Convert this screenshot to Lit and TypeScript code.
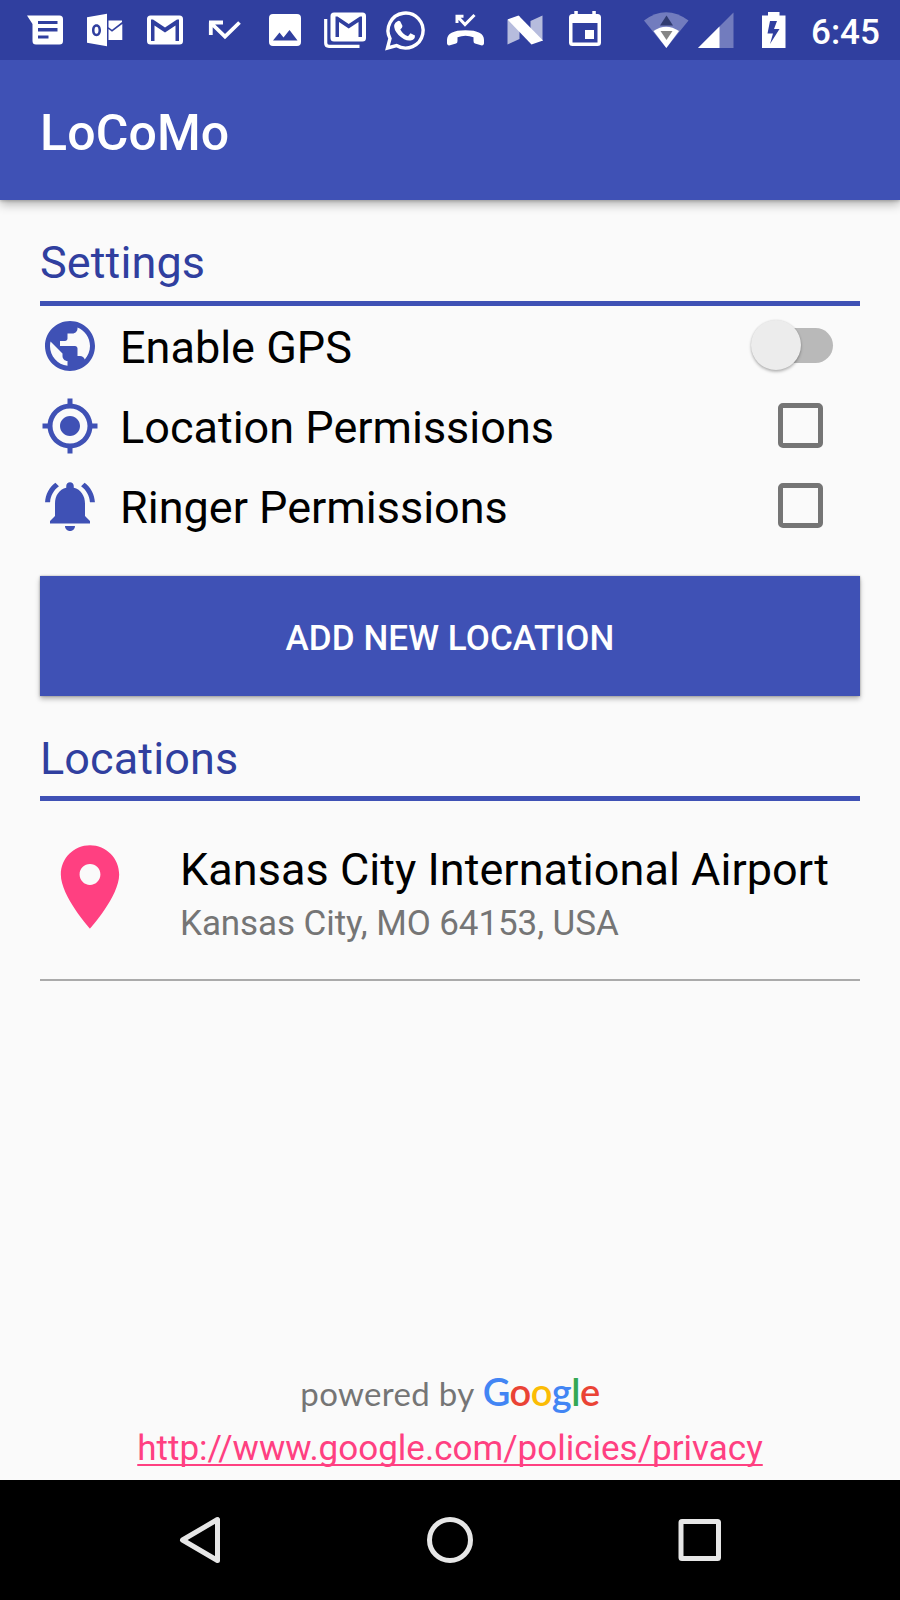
import { LitElement, html, css } from "lit";
import { customElement, property } from "lit/decorators.js";

const GLOBE = "M12 2C6.48 2 2 6.48 2 12s4.48 10 10 10 10-4.48 10-10S17.52 2 12 2zm-1 17.93c-3.95-.49-7-3.85-7-7.93 0-.62.08-1.21.21-1.79L9 15v1c0 1.1.9 2 2 2v1.93zm6.9-2.54c-.26-.81-1-1.39-1.9-1.39h-1v-3c0-.55-.45-1-1-1H8v-2h2c.55 0 1-.45 1-1V7h2c1.1 0 2-.9 2-2v-.41c2.93 1.19 5 4.06 5 7.41 0 2.08-.8 3.97-2.1 5.39z";
const TARGET = "M12 8c-2.21 0-4 1.79-4 4s1.79 4 4 4 4-1.79 4-4-1.79-4-4-4zm8.94 3c-.46-4.17-3.77-7.48-7.94-7.94V1h-2v2.06C6.83 3.52 3.52 6.83 3.06 11H1v2h2.06c.46 4.17 3.77 7.48 7.94 7.94V23h2v-2.06c4.17-.46 7.48-3.77 7.94-7.94H23v-2h-2.06zM12 19c-3.87 0-7-3.13-7-7s3.13-7 7-7 7 3.13 7 7-3.13 7-7 7z";
const BELL = "M7.58 4.08L6.15 2.65C3.75 4.48 2.17 7.3 2.03 10.5h2c.15-2.65 1.51-4.97 3.55-6.42zm12.39 6.42h2c-.15-3.2-1.73-6.02-4.12-7.85l-1.42 1.43c2.02 1.45 3.39 3.77 3.54 6.42zM18 11c0-3.07-1.64-5.64-4.5-6.32V4c0-.83-.67-1.5-1.5-1.5s-1.5.67-1.5 1.5v.68C7.63 5.36 6 7.92 6 11v5l-2 2v1h16v-1l-2-2v-5zm-6 11c.14 0 .27-.01.4-.04.65-.14 1.18-.58 1.44-1.18.1-.24.15-.5.15-.78h-4c.01 1.1.9 2 2.01 2z";
const PIN = "M12 2C8.13 2 5 5.13 5 9c0 5.25 7 13 7 13s7-7.75 7-13c0-3.87-3.13-7-7-7zm0 9.5c-1.38 0-2.5-1.12-2.5-2.5s1.12-2.5 2.5-2.5 2.5 1.12 2.5 2.5-1.12 2.5-2.5 2.5z";

@customElement("status-bar")
class StatusBar extends LitElement {
  static styles = css`
    :host { display: block; height: 60px; background: #303f9f; color: #fff; }
    .bar { display: flex; height: 60px; }
    .icons { display: block; flex: none; }
    .clock { font: 500 35px/41px Roboto, sans-serif; padding-top: 12px; margin-left: 1px; white-space: nowrap; }
  `;
  render() {
    return html`<div class="bar">
      <svg class="icons" width="810" height="60" viewBox="0 0 810 60" fill="#fff">
        <path fill-rule="evenodd" d="M27 15.500H59.500Q63 15.500 63 19V41Q63 44.500 59.500 44.500H36Q32.500 44.500 32.500 41V24ZM38 21v3h19.500v-3ZM38 28v3.500h19.500V28ZM38 35.500v3h10.500v-3Z"/>
        <path fill-rule="evenodd" d="M87 17.300L107 13.700V46.300L87 42.700ZM96.500 24.300C93.800 24.300 92 26.800 92 30.300S93.800 36.200 96.500 36.200 101 33.700 101 30.300 99.200 24.300 96.500 24.300ZM96.500 26.800C98 26.800 98.500 28.500 98.500 30.300S98 33.800 96.500 33.800 94.500 32.200 94.500 30.300 95 26.800 96.500 26.800Z"/>
        <path d="M108.500 20.500H122V22L112 29.800L108.500 27.200ZM108.500 29L112 31.800L122.300 24V40H108.500Z"/>
        <path fill-rule="evenodd" d="M150.500 15.500H179.500Q183 15.500 183 19V41Q183 44.500 179.500 44.500H150.500Q147 44.500 147 41V19Q147 15.500 150.500 15.500ZM151 41H154.500V25.500L165 32.500L175.500 25.500V41H179V19.500H177L165 27.500L153 19.500H151Z"/>
        <path d="M210.800 35V22.500M209 22.500H223M211.500 23.500L225 36.500L239.500 22.500" fill="none" stroke="#fff" stroke-width="3.800"/>
        <path fill-rule="evenodd" d="M273 14H297Q301 14 301 18V42Q301 46 297 46H273Q269 46 269 42V18Q269 14 273 14ZM273 40.500H297.500L289.500 30L283.500 37.500L279.500 32.500Z"/>
        <path fill-rule="evenodd" d="M334 12.500H362.500Q366 12.500 366 16V38Q366 41.500 362.500 41.500H334Q330.500 41.500 330.500 38V16Q330.500 12.500 334 12.500ZM335.500 37H339V22L348.700 28.500L358.500 22V37H362V16.500H360L348.700 24L337.500 16.500H335.500Z"/>
        <path d="M325.700 19V43Q325.700 46.300 329 46.300H359.500" fill="none" stroke="#fff" stroke-width="3.200"/>
        <path d="M387.500 48L390 38.500A17.500 17.500 0 1 1 396.500 45.500Z" fill="none" stroke="#fff" stroke-width="3.400"/>
        <path d="M397.500 21.200Q399 20.400 400.300 21.500L402.500 26Q402.500 27.500 400.300 29.500Q403 34.500 408 36.200L410.500 33.300L415 35.500Q415 40 410.500 40.500Q405 41.300 398.500 35Q393.500 29.500 394.200 25Q395 22.300 397.500 21.200Z"/>
        <path d="M457 23V16.200H463.500M457.500 16.500L465 24.500L474.500 15" fill="none" stroke="#fff" stroke-width="3"/>
        <path d="M447 40Q447 30.200 465.500 30.200T484 40V43.500Q483.500 46 481 45.300L475 43.600Q473.500 43 473.500 41V37.200Q465.500 34.200 457.500 37.200V41Q457.500 43 456 43.600L450 45.300Q447.500 46 447 43.500Z"/>
        <path d="M507.500 20V44.500L519.500 39V16ZM530.500 21V36.500L542.500 41V15.500Z" opacity=".65"/>
        <path d="M507.500 19.500L518.500 15.500L543 40.500L531.500 44.500Z"/>
        <path fill-rule="evenodd" d="M574.300 11H577.800V14H592.300V11H595.800V14H597.500Q601 14 601 17.500V42.500Q601 46 597.500 46H572.500Q569 46 569 42.500V17.500Q569 14 572.500 14H574.300ZM572.500 23V42.500H597.500V23ZM585 30h9v9h-9Z"/>
        <path d="M644 20.500Q666 4 688.500 20.500L666.300 48Z" opacity=".32"/>
        <path d="M653.500 31Q666 22.500 679 31L666.300 48Z"/>
        <path d="M666.500 15.500L673 25.500H660Z" fill="#303b70"/>
        <path d="M660.500 31H672.500L666.500 40Z" fill="#858585"/>
        <path d="M698 48L733.500 12.500V48Z" opacity=".32"/>
        <path d="M698 48L719.500 26.500V48Z"/>
        <path fill-rule="evenodd" d="M762 15.500H768V12H779.500V15.500H785.500V48H762ZM770 21L767.500 33.500H773L770 44L779.500 29H774L777 21Z"/>
      </svg>
      <span class="clock">6:45</span>
    </div>`;
  }
}

@customElement("setting-row")
class SettingRow extends LitElement {
  @property() icon = "";
  @property() label = "";
  @property() kind = "checkbox";
  static styles = css`
    :host { display: block; }
    .row { display: flex; align-items: center; height: 80px; }
    .icon { flex: none; width: 60px; height: 60px; margin-bottom: .6px; fill: #3f51b5; }
    .label { flex: 1; padding: 3px 0 0 20px; font: 400 45px/53px Roboto, sans-serif; color: #000; white-space: nowrap; }
    .box { box-sizing: border-box; width: 45px; height: 45px; margin: 0 37.500px 1px 0; border: 5px solid #757575; border-radius: 5px; }
    .track { display: flex; align-items: center; width: 70px; height: 35px; margin: 0 27.500px 1.400px 0; border-radius: 18px; background: #b9b9b9; }
    .thumb { flex: none; width: 50px; height: 50px; margin-left: -12px; border-radius: 50%; background: #ececec; box-shadow: 0 2px 3px rgba(0,0,0,.26), 0 0 2px rgba(0,0,0,.12); }
  `;
  render() {
    return html`<div class="row">
      <svg class="icon" viewBox="0 0 24 24"><path d=${this.icon}></path></svg>
      <span class="label">${this.label}</span>
      ${this.kind === "switch"
        ? html`<span class="track" role="switch" aria-checked="false"><span class="thumb"></span></span>`
        : html`<span class="box" role="checkbox" aria-checked="false"></span>`}
    </div>`;
  }
}

@customElement("app-root")
class AppRoot extends LitElement {
  static styles = css`
    :host { display: flex; flex-direction: column; height: 1600px; background: #fafafa; font-family: Roboto, sans-serif; }
    status-bar { z-index: 1; }
    .appbar { display: flex; align-items: center; height: 140px; box-sizing: border-box; padding: 6px 40px 0; background: #3f51b5; color: #fff; font-size: 50px; font-weight: 500; line-height: 59px; letter-spacing: .15px; box-shadow: 0 4px 10px rgba(0,0,0,.3), 0 1px 3px rgba(0,0,0,.2); }
    .content { flex: 1; display: flex; flex-direction: column; padding: 0 40px; }
    .heading { box-sizing: border-box; color: #303f9f; font-size: 45px; line-height: 53px; letter-spacing: .1px; border-bottom: 5px solid #3f51b5; }
    .settings { height: 106px; padding-top: 36px; }
    .locations { height: 105px; padding-top: 36px; }
    .add { display: flex; align-items: center; justify-content: center; height: 120px; margin-top: 30px; border: 0; padding: 4px 0 0; box-sizing: border-box; background: #3f51b5; color: #fff; font: 500 35px/41px Roboto, sans-serif; letter-spacing: .07px; box-shadow: 0 3px 5px rgba(0,0,0,.28), 0 0 2px rgba(0,0,0,.3); }
    .place { display: flex; height: 180px; box-sizing: border-box; padding-top: 36px; border-bottom: 2px solid #aaa; }
    .pin { flex: none; width: 100px; height: 100px; fill: #ff4081; }
    .text { padding: 6px 0 0 40px; white-space: nowrap; }
    .name { font-size: 45px; line-height: 53px; letter-spacing: .04px; color: #000; }
    .addr { font-size: 35px; line-height: 41px; letter-spacing: -.08px; color: #757575; padding-top: 7px; }
    .footer { margin-top: auto; display: flex; flex-direction: column; align-items: center; }
    .powered { display: flex; align-items: baseline; color: #757575; font: 400 33px/40px Lato, sans-serif; letter-spacing: .35px; white-space: pre; }
    .brand { font: 600 38px/40px Lato, sans-serif; margin-left: 8px; letter-spacing: -.5px; }
    .blue { color: #4285f4; } .red { color: #ea4335; } .yellow { color: #fbbc05; } .green { color: #34a853; }
    .link { margin: 15px 0 11px; font-size: 35px; line-height: 41px; color: #ff4081; text-decoration: underline; text-decoration-thickness: 2px; text-underline-offset: 4px; text-decoration-skip-ink: none; }
    .nav { display: block; height: 120px; background: #000; }
  `;
  render() {
    return html`
      <status-bar></status-bar>
      <header class="appbar">LoCoMo</header>
      <main class="content">
        <div class="heading settings">Settings</div>
        <setting-row .icon=${GLOBE} label="Enable GPS" kind="switch"></setting-row>
        <setting-row .icon=${TARGET} label="Location Permissions"></setting-row>
        <setting-row .icon=${BELL} label="Ringer Permissions"></setting-row>
        <button class="add">ADD NEW LOCATION</button>
        <div class="heading locations">Locations</div>
        <div class="place">
          <svg class="pin" viewBox="0 0 24 24"><path d=${PIN}></path></svg>
          <div class="text">
            <div class="name">Kansas City International Airport</div>
            <div class="addr">Kansas City, MO 64153, USA</div>
          </div>
        </div>
        <div class="footer">
          <div class="powered"><span>powered by</span><span class="brand"><span class="blue">G</span><span class="red">o</span><span class="yellow">o</span><span class="blue">g</span><span class="green">l</span><span class="red">e</span></span></div>
          <a class="link">http://www.google.com/policies/privacy</a>
        </div>
      </main>
      <svg class="nav" width="900" height="120" viewBox="0 0 900 120" fill="none" stroke="#e6e6e6" stroke-width="5" stroke-linejoin="round">
        <path d="M217.500 39.500V80.500L182.500 60Z"/>
        <circle cx="450" cy="60" r="20.500"/>
        <rect x="681" y="41.500" width="37.500" height="37" rx="1"/>
      </svg>`;
  }
}
